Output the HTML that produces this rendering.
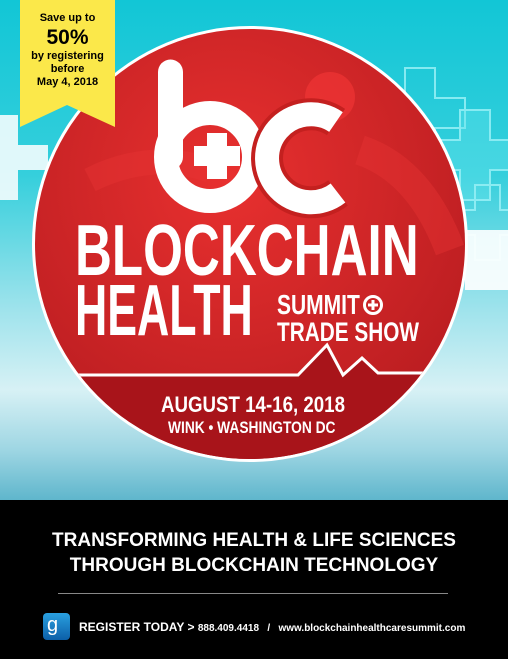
<!DOCTYPE html>
<html><head><meta charset="utf-8">
<style>
*{margin:0;padding:0;box-sizing:border-box}
body{width:508px;height:659px;overflow:hidden;position:relative;background:#000;font-family:"Liberation Sans",sans-serif}
#top{position:absolute;left:0;top:0;width:508px;height:500px;background:linear-gradient(180deg,#12c6d6 0%,#35cfdc 35%,#9fe3ec 62%,#d7f1f5 78%,#9ed6e3 90%,#5fb6cc 100%)}
.t{position:absolute;color:#fff;font-weight:bold;white-space:nowrap}
.n{font-weight:bold;transform-origin:0 0}
</style></head><body>
<div id="top"></div>
<svg width="508" height="500" style="position:absolute;left:0;top:0">
<defs>
<radialGradient id="rg" cx="0.45" cy="0.35" r="0.7">
<stop offset="0" stop-color="#e8302f"/><stop offset="1" stop-color="#b81c20"/>
</radialGradient>
<clipPath id="cc"><circle cx="250" cy="244" r="215"/></clipPath>
</defs>
<g fill="none" stroke="#9ff3f8" stroke-width="2" opacity="0.8">
<path d="M405 68h30v30h30v30h-30v30h-30v-30h-30v-30h30z"/>
<path d="M460 110h30v30h30v30h-30v30h-30v-30h-30v-30h30z" fill="#6fe8f0" fill-opacity="0.4"/>
<path d="M475 185h25v25h25v25h-25v25h-25v-25h-25v-25h25z"/>
</g>
<path d="M465 230h45v60h-45z" fill="#fff" opacity="0.9"/>
<g fill="#fff" opacity="0.85"><path d="M0 115h18v30h30v25h-30v30h-18z"/></g>
<circle cx="250" cy="244" r="218" fill="#fff"/>
<circle cx="250" cy="244" r="215" fill="url(#rg)"/>
<g clip-path="url(#cc)">
<path d="M0 375 L298 375 L327 345 L343 375 L362 358 L378 373 L500 373 L500 500 L0 500Z" fill="#a8141a"/>
<path d="M0 375 L298 375 L327 345 L343 375 L362 358 L378 373 L500 373" fill="none" stroke="#fff" stroke-width="3"/>
<circle cx="330" cy="97" r="25" fill="#ef3535" opacity="0.7"/>
<path d="M360 150 q60 20 90 100" stroke="#e83535" stroke-width="30" fill="none" opacity="0.4"/>
<path d="M90 180 q60 -30 120 -10" stroke="#e83535" stroke-width="25" fill="none" opacity="0.4"/>
</g>
<path d="M170.5 72 V157" stroke="#fff" stroke-width="25" stroke-linecap="round" fill="none"/>
<circle cx="210" cy="157" r="44" stroke="#fff" stroke-width="24" fill="none"/>
<path d="M207 133h20v13h13v20h-13v13h-20v-13h-13v-20h13z" fill="#fff"/>
<path d="M336 122 A44 44 0 1 0 338 193" stroke="#c4201f" stroke-width="32" fill="none"/>
<path d="M336 122 A44 44 0 1 0 338 193" stroke="#fff" stroke-width="24" fill="none"/>
<path d="M20 0H115V127L67 105L20 127Z" fill="#fbe84a"/>
</svg>
<div style="position:absolute;left:20px;top:12px;width:95px;text-align:center;color:#000;font-weight:bold;font-size:11px;line-height:13px">Save up to<div style="font-size:21px;line-height:25px">50%</div>by registering<br>before<br>May 4, 2018</div>
<div class="t n" style="left:75px;top:215px;font-size:72px;line-height:72px;transform:scaleX(0.71)">BLOCKCHAIN</div>
<div class="t n" style="left:75px;top:275px;font-size:72px;line-height:72px;transform:scaleX(0.62)">HEALTH</div>
<div class="t n" style="left:277px;top:291px;font-size:28px;line-height:28px;transform:scaleX(0.75)">SUMMIT</div>
<svg width="22" height="22" style="position:absolute;left:362px;top:294px"><circle cx="11" cy="11" r="8.5" stroke="#fff" stroke-width="3" fill="none"/><path d="M11 6v10M6 11h10" stroke="#fff" stroke-width="3"/></svg>
<div class="t n" style="left:277px;top:319px;font-size:27px;line-height:27px;transform:scaleX(0.77)">TRADE SHOW</div>
<div class="t n" style="left:161px;top:394px;font-size:22px;line-height:22px;transform:scaleX(0.85)">AUGUST 14-16, 2018</div>
<div class="t n" style="left:168px;top:419px;font-size:17px;line-height:17px;transform:scaleX(0.81)">WINK • WASHINGTON DC</div>
<div class="t" style="left:0;width:508px;text-align:center;top:528px;font-size:19px;line-height:25px">TRANSFORMING HEALTH &amp; LIFE SCIENCES<br>THROUGH BLOCKCHAIN TECHNOLOGY</div>
<div style="position:absolute;left:58px;top:593px;width:390px;height:1px;background:#888"></div>
<div style="position:absolute;left:43px;top:613px;width:27px;height:27px;border-radius:4px;background:linear-gradient(#2aa0e0,#0c5fa8);color:#fff;font-size:20px;line-height:24px;text-indent:4px">g</div>
<div class="t" style="left:79px;top:619px;font-size:12px;line-height:16px">REGISTER TODAY &gt; <span style="font-size:10px">888.409.4418 &nbsp; / &nbsp; www.blockchainhealthcaresummit.com</span></div>
</body></html>
